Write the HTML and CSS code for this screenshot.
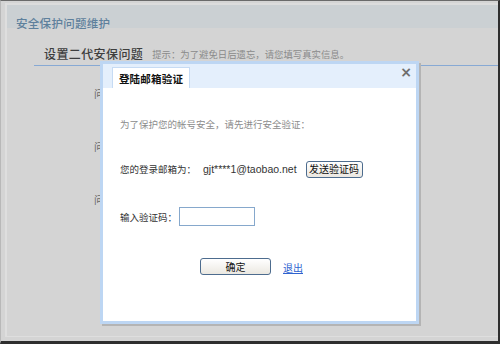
FILE: index.html
```html
<!DOCTYPE html>
<html lang="zh-CN">
<head>
<meta charset="utf-8">
<title>安全保护问题维护</title>
<link rel="stylesheet" href="styles.css">
</head>
<body>
<div class="frame">
  <div class="page">
    <div class="header"><span class="header-title">安全保护问题维护</span></div>
    <div class="section">
      <div class="section-head">
        <span class="section-title">设置二代安保问题</span>
        <span class="section-hint">提示：为了避免日后遗忘，请您填写真实信息。</span>
      </div>
      <div class="questions">
        <div class="q-row">问题一：</div>
        <div class="q-row">问题二：</div>
        <div class="q-row">问题三：</div>
      </div>
    </div>
  </div>

  <div class="dialog">
    <div class="dialog-head">
      <div class="tab">登陆邮箱验证</div>
      <span class="close">×</span>
    </div>
    <div class="dialog-body">
      <p class="notice">为了保护您的帐号安全，请先进行安全验证：</p>
      <div class="row row-mail">
        <span>您的登录邮箱为：</span>
        <span class="mail">gjt****1@taobao.net</span>
        <button class="btn btn-send">发送验证码</button>
      </div>
      <div class="row row-code">
        <span>输入验证码：</span>
        <input class="code-input" type="text">
      </div>
      <div class="actions">
        <button class="btn btn-ok">确定</button>
        <a class="exit" href="#">退出</a>
      </div>
    </div>
  </div>
</div>
</body>
</html>
```

FILE: styles.css
```css
* { box-sizing: border-box; }
html, body {
  margin: 0;
  padding: 0;
  width: 500px;
  height: 344px;
  overflow: hidden;
  font-family: "Noto Sans CJK SC", "Liberation Sans", sans-serif;
}
.frame {
  position: relative;
  width: 500px;
  height: 344px;
  background: #d4d4d4;
  border-top: 1px solid #6a6a6a;
  border-right: 2px solid #2e2e2e;
  border-bottom: 3px solid #2e2e2e;
  border-left: 1px solid #b8b8b8;
  padding: 2px 0 4px 4px;
}
.page {
  height: 100%;
  border-left: 2px solid #dedede;
  border-bottom: 1px solid #dedede;
}
.header {
  height: 25px;
  background: #cbd0d3;
  border-top: 2px solid #dcdcdc;
  padding: 4px 0 0 9px;
}
.header-title {
  font-size: 11.5px;
  font-weight: 500;
  color: #5e809c;
  letter-spacing: 0.3px;
}
.section {
  padding-top: 14px;
}
.section-head {
  margin-left: 27px;
  padding: 0 0 0 10px;
  height: 24px;
  border-bottom: 1px solid #87a9d4;
  display: flex;
  align-items: center;
  gap: 9px;
}
.section-title {
  font-size: 12px;
  font-weight: 500;
  color: #3e3e3e;
  letter-spacing: 0.4px;
}
.section-hint {
  font-size: 9.4px;
  color: #8a8a8a;
}
.questions {
  padding: 20px 0 0 87px;
  display: flex;
  flex-direction: column;
  gap: 39px;
}
.q-row {
  font-size: 10px;
  color: #666;
  height: 14px;
}

.dialog {
  position: absolute;
  left: 99px;
  top: 60px;
  width: 319px;
  height: 263px;
  border: 3px solid #bdd6f3;
  background: #fff;
  box-shadow: 2px 2px 0 #b4b4b4;
}
.dialog-head {
  position: relative;
  height: 24px;
  background: #e4effc;
  padding: 3px 0 0 9px;
}
.tab {
  width: 78px;
  height: 21px;
  background: #fff;
  border: 1px solid #c6dbf4;
  border-bottom: none;
  font-size: 10.5px;
  font-weight: bold;
  color: #111;
  display: flex;
  align-items: center;
  justify-content: center;
  letter-spacing: 0.2px;
}
.close {
  position: absolute;
  right: 4px;
  top: 0px;
  font-family: "DejaVu Sans", sans-serif;
  font-size: 14px;
  font-weight: bold;
  color: #6e6e6e;
}
.dialog-body {
  padding: 29px 0 0 17px;
  font-size: 9.5px;
  color: #333;
}
.notice {
  margin: 0;
  height: 14px;
  line-height: 14px;
  color: #8c8c8c;
}
.row {
  display: flex;
  align-items: center;
}
.row-mail {
  margin-top: 29px;
  height: 18px;
}
.mail {
  font-family: "Liberation Sans", sans-serif;
  font-size: 10.5px;
  margin-left: 7px;
  color: #333;
}
.btn {
  font-family: "Noto Sans CJK SC", sans-serif;
  font-size: 10px;
  color: #111;
  background: linear-gradient(#ffffff, #ebe8e1);
  border: 1px solid #4d6c8e;
  border-radius: 3px;
  padding: 0;
  height: 17px;
  line-height: 14px;
}
.btn-send {
  width: 57px;
  margin-left: 9px;
}
.row-code {
  margin-top: 29px;
  height: 19px;
}
.code-input {
  width: 76px;
  height: 19px;
  border: 1px solid #86a8cc;
  margin: 0 0 0 2px;
  padding: 0;
}
.actions {
  margin-top: 32px;
  padding-left: 80px;
  display: flex;
  align-items: center;
  gap: 12px;
}
.btn-ok {
  width: 71px;
}
.exit {
  font-size: 10px;
  color: #2f63cf;
  text-decoration: underline;
  margin-top: 2px;
}
```
